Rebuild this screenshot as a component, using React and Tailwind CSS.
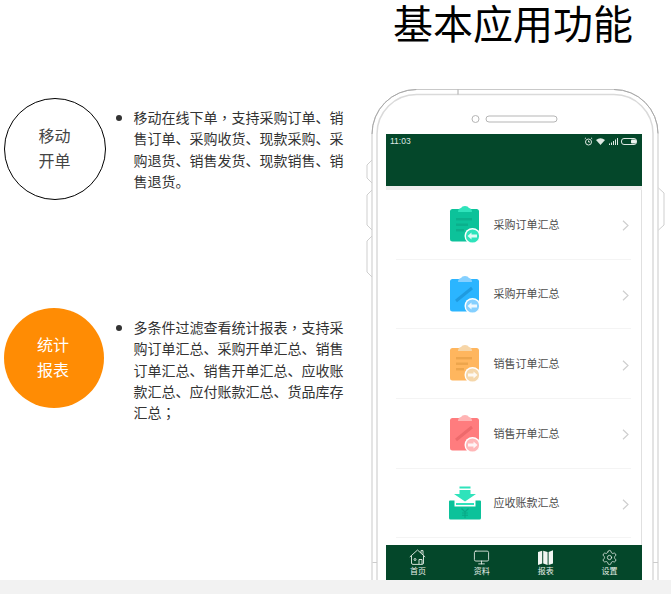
import React from "react";
import { Monitor, Settings } from "lucide-react";

const font = { fontFamily: '"Liberation Sans","Noto Sans CJK SC",sans-serif' };
const tc = { fontFamily: '"Noto Sans CJK TC",sans-serif' };

function Clipboard({ body, top, badge, line, kind, dir }) {
  return (
    <svg width="36" height="38" viewBox="0 0 36 38" className="shrink-0">
      <rect x="3" y="3" width="29" height="32.5" rx="2.5" fill={body} />
      <path d="M11 6 Q11 2.5 14 2 Q15 0 18 0 Q21 0 22 2 Q25 2.5 25 6 Z" fill={top} />
      {kind === "lines" ? (
        <g fill={line}>
          <rect x="9" y="12" width="16" height="2.4" />
          <rect x="9" y="17.5" width="12" height="2.4" />
          <rect x="9" y="23" width="8" height="2.4" />
        </g>
      ) : (
        <path d="M9 25 L25 12" stroke={line} strokeWidth="3" />
      )}
      <circle cx="25.5" cy="30" r="8" fill="#fff" />
      <circle cx="25.5" cy="30" r="6.6" fill={badge} />
      <path
        d={dir === "left" ? "M20.5 30 L24.5 26.5 V28.5 H30 V31.5 H24.5 V33.5 Z" : "M30.5 30 L26.5 26.5 V28.5 H21 V31.5 H26.5 V33.5 Z"}
        fill="#fff"
        fillOpacity="0.85"
      />
    </svg>
  );
}

function Inbox() {
  return (
    <svg width="36" height="38" viewBox="0 0 36 38" className="shrink-0">
      <rect x="12.5" y="1.5" width="11" height="2" fill="#2fe3bb" />
      <path d="M12.5 5 H23.5 V9 H29 L18 16.5 L7 9 H12.5 Z" fill="#2fe3bb" />
      <rect x="9" y="18" width="18" height="2" fill="#2fe3bb" />
      <path d="M3 15.5 H7.5 V21.5 H28.5 V15.5 H33 Q34 15.5 34 16.5 V33 Q34 34.5 32.5 34.5 H3.5 Q2 34.5 2 33 V16.5 Q2 15.5 3 15.5 Z" fill="#0cc29a" />
      <path d="M14.5 23.5 L18 27 L21.5 23.5 M18 27 V33 M15 28 H21 M15 30.2 H21" stroke="#0aa987" strokeWidth="1.1" fill="none" />
    </svg>
  );
}

function Row({ icon, label }) {
  return (
    <div className="relative flex h-[69.7px] items-center pl-[61px] pr-[12px]">
      {icon}
      <span className="ml-[10.5px] text-[11px] text-[#4d4d4d]">{label}</span>
      <svg width="7" height="11" viewBox="0 0 7 11" className="ml-auto mt-[2px]">
        <path d="M1 0.8 L6 5.5 L1 10.2" fill="none" stroke="#cfcfcf" strokeWidth="1.2" />
      </svg>
      <div className="absolute bottom-0 left-[10px] h-px w-[235px] bg-[#f4f4f4]" />
    </div>
  );
}

function Tab({ icon, label }) {
  return (
    <div className="flex flex-1 flex-col items-center pt-[4px]">
      <div className="flex h-[16px] items-center justify-center">{icon}</div>
      <span className="mt-[1px] text-[8px] leading-[11px] text-[#e8efe9]">{label}</span>
    </div>
  );
}

function Outline() {
  return (
    <svg width="300" height="491" viewBox="0 0 300 491" className="absolute left-0 top-0" fill="none">
      <path d="M6 491 V45 A44.5 44.5 0 0 1 50.5 0.5 H248 A44 44 0 0 1 292 44.5 V491" stroke="#c9c9c9" strokeWidth="1" />
      <path d="M6 45 A44.5 44.5 0 0 1 50.5 0.5 M248 0.5 A44 44 0 0 1 292 44.5" stroke="#a8a8a8" strokeWidth="1" />
      <path d="M11 491 V45 A39.5 39.5 0 0 1 50.5 5.5 H248 A39 39 0 0 1 287 44.5 V491" stroke="#dadada" strokeWidth="1.5" />
      <path d="M92 0.5 V5.5" stroke="#aaa" />
      <path d="M6.5 473.5 H11 M287 473.5 H292" stroke="#ccc" />
      <path d="M6 71 L1 76 V89 L6 94" stroke="#cfcfcf" />
      <path d="M6 101 L1 106 V136 L6 141" stroke="#cfcfcf" />
      <path d="M6 147 L1 152 V183 L6 188" stroke="#cfcfcf" />
      <path d="M292.5 99 L298 104 V136 L292.5 141" stroke="#cfcfcf" />
      <circle cx="109.5" cy="30" r="3.5" stroke="#b5b5b5" />
      <rect x="120" y="27" width="71" height="6" rx="3" stroke="#b5b5b5" />
    </svg>
  );
}

function StatusIcons() {
  return (
    <div className="ml-auto flex items-center">
      <svg width="9" height="9" viewBox="0 0 9 9" fill="none" stroke="#dfe9e3" strokeWidth="1">
        <circle cx="4.5" cy="5" r="3" />
        <path d="M4.5 3.5 V5 H6 M0.8 1.8 L2 0.8 M8.2 1.8 L7 0.8" />
      </svg>
      <svg width="9" height="7" viewBox="0 0 9 7" className="ml-[3px]" fill="#dfe9e3">
        <path d="M0 2 Q4.5 -1.5 9 2 L4.5 7 Z" />
      </svg>
      <svg width="9" height="7" viewBox="0 0 9 7" className="ml-[4px]" fill="#dfe9e3">
        <rect x="0" y="5.5" width="1" height="1.5" />
        <rect x="2" y="4.5" width="1" height="2.5" />
        <rect x="4" y="3" width="1" height="4" />
        <rect x="6" y="1.5" width="1" height="5.5" />
        <rect x="8" y="0" width="1" height="7" />
      </svg>
      <svg width="17" height="7" viewBox="0 0 17 7" className="ml-[3px]" fill="none">
        <rect x="0.5" y="0.5" width="15" height="6" rx="2.5" stroke="#dfe9e3" />
        <rect x="10" y="1.5" width="5" height="4" rx="1" fill="#eef4f0" />
      </svg>
    </div>
  );
}

function Feature({ label, round, children, className = "" }) {
  return (
    <div className={"flex items-start " + className}>
      <div className={"flex shrink-0 flex-col items-center justify-center rounded-full text-[16px] leading-[25px] " + round}>
        {label.map((l) => (
          <span key={l}>{l}</span>
        ))}
      </div>
      <div className="ml-[10px] mt-[17px] h-[6px] w-[6px] shrink-0 rounded-full bg-[#333]" />
      <p className="ml-[11.5px] w-[211px] pt-[10px] text-[14px] leading-[21.3px] text-[#333]">{children}</p>
    </div>
  );
}

export default function App() {
  return (
    <div className="flex h-[594px] w-full flex-col overflow-hidden bg-[#f2f2f2]" style={font}>
      <div className="h-[580px] overflow-hidden bg-white">
        <h1 className="h-[89px] pl-[393px] text-[40px] font-normal leading-[44px] text-black" style={{ fontFamily: '"Noto Sans CJK SC",sans-serif' }}>
          基本应用功能
        </h1>
        <div className="flex">
          <div className="w-[366px] shrink-0 pl-[4px] pt-[9px]">
            <Feature label={["移动", "开单"]} round="h-[102px] w-[102px] border border-black pr-[1px] text-[#444]">
              移动在线下单<span className="leading-none" style={tc}>，</span>支持采购订单、销售订单、采购收货、现款采购、采购退货、销售发货、现款销售、销售退货。
            </Feature>
            <Feature className="mt-[108px]" label={["统计", "报表"]} round="mr-[2px] h-[100px] w-[100px] bg-[#ff8c04] pr-[2px] text-white">
              多条件过滤查看统计报表<span className="leading-none" style={tc}>，</span>支持采购订单汇总、采购开单汇总、销售订单汇总、销售开单汇总、应收账款汇总、应付账款汇总、货品库存汇总<span className="leading-none" style={tc}>；</span>
            </Feature>
          </div>
          <div className="relative h-[491px] w-[300px] shrink-0">
            <Outline />
            <div className="absolute left-[20px] top-[45px] w-[255.5px]">
              <div className="flex h-[52px] items-start bg-[#04472a] px-[4px] pt-[3px] text-[8.5px] leading-[9px] text-[#dfe9e3]">
                <span>11:03</span>
                <StatusIcons />
              </div>
              <div className="h-[4px] bg-[#eeeeee]" />
              <div className="h-[355px] border-r border-[#e0e0e0] bg-white">
                <Row label="采购订单汇总" icon={<Clipboard body="#0cc29a" top="#2fe3bb" badge="#2fe3bb" line="#0bb08c" kind="lines" dir="left" />} />
                <Row label="采购开单汇总" icon={<Clipboard body="#2bb5ff" top="#85d0ff" badge="#85d0ff" line="#1f9be0" kind="pen" dir="left" />} />
                <Row label="销售订单汇总" icon={<Clipboard body="#ffb65e" top="#f7d6a8" badge="#f5d7ab" line="#eda54c" kind="lines" dir="right" />} />
                <Row label="销售开单汇总" icon={<Clipboard body="#ff7c7e" top="#ffb4b4" badge="#ffb7b8" line="#ee6a6c" kind="pen" dir="right" />} />
                <Row label="应收账款汇总" icon={<Inbox />} />
              </div>
              <div className="flex h-[40px] bg-[#04472a]">
                <Tab
                  label="首页"
                  icon={
                    <svg width="17" height="16" viewBox="0 0 17 16" fill="none" stroke="#e8efe9" strokeWidth="0.9">
                      <path d="M0.8 8 L8.5 1 L16.2 8 M12 4 V1.6 H14 V6 M2.5 7 V14 Q2.5 15.4 4 15.4 H13 Q14.5 15.4 14.5 14 V7" />
                      <path d="M10 15 V10.5 H13 V15" />
                      <circle cx="6" cy="10.5" r="1" />
                    </svg>
                  }
                />
                <Tab label="资料" icon={<Monitor size={17} strokeWidth={1.2} color="#e8efe9" />} />
                <Tab
                  label="报表"
                  icon={
                    <svg width="15" height="15" viewBox="0 0 15 15" fill="#f2f6f3">
                      <path d="M0 2 L4.2 0.8 V13.5 L0 15 Z" />
                      <path d="M5.2 0.8 L9.6 2 V15 L5.2 13.5 Z" />
                      <path d="M10.6 2 L15 0.3 V13.5 L10.6 15 Z" />
                    </svg>
                  }
                />
                <Tab label="设置" icon={<Settings size={17} strokeWidth={1.1} color="#e8efe9" />} />
              </div>
            </div>
          </div>
        </div>
      </div>
    </div>
  );
}
